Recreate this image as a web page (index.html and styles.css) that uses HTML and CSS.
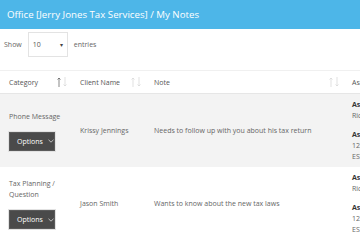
FILE: index.html
```html
<!DOCTYPE html>
<html lang="en">
<head>
  <meta charset="UTF-8" />
  <title>My Notes</title>
  <link rel="stylesheet" href="styles.css">
</head>
<body>

  <div class="title-bar">
    <h2>Office [Jerry Jones Tax Services] / My Notes</h2>
  </div>

  <!-- page length -->
  <div class="length-bar">
    <span>Show</span>
    <span class="select">10 <span class="caret">&#9662;</span></span>
    <span>entries</span>
  </div>

  <!-- notes table -->
  <table class="notes">
    <thead>
      <tr>
        <th class="col-cat"><div class="th-inner">Category <span class="sort active"><svg width="10" height="10" viewBox="0 0 10 10"><path class="up" d="M2 10V1M0.5 2.5L2 1 3.5 2.5"/><path class="down" d="M8 0v9M6.5 7.5L8 9 9.5 7.5"/></svg></span></div></th>
        <th class="col-client"><div class="th-inner">Client Name <span class="sort"><svg width="10" height="10" viewBox="0 0 10 10"><path class="up" d="M2 10V1M0.5 2.5L2 1 3.5 2.5"/><path class="down" d="M8 0v9M6.5 7.5L8 9 9.5 7.5"/></svg></span></div></th>
        <th class="col-note"><div class="th-inner">Note <span class="sort"><svg width="10" height="10" viewBox="0 0 10 10"><path class="up" d="M2 10V1M0.5 2.5L2 1 3.5 2.5"/><path class="down" d="M8 0v9M6.5 7.5L8 9 9.5 7.5"/></svg></span></div></th>
        <th class="col-assign"><div class="th-inner">Assigned</div></th>
      </tr>
    </thead>
    <tbody>
      <tr class="odd">
        <td>
          <div>Phone Message</div>
          <button class="options">Options <svg class="chev" width="6" height="4" viewBox="0 0 6 4"><path d="M0.5 0.8L3 3.2 5.5 0.8"/></svg></button>
        </td>
        <td>Krissy Jennings</td>
        <td>Needs to follow up with you about his tax return</td>
        <td class="assign">
          <strong>Assigned To:</strong><br>Rick Jones
          <div class="gap"></div>
          <strong>Assigned By:</strong><br>12/04/2017<br>ESTIMATED
        </td>
      </tr>
      <tr>
        <td>
          <div>Tax Planning / Question</div>
          <button class="options">Options <svg class="chev" width="6" height="4" viewBox="0 0 6 4"><path d="M0.5 0.8L3 3.2 5.5 0.8"/></svg></button>
        </td>
        <td>Jason Smith</td>
        <td>Wants to know about the new tax laws</td>
        <td class="assign">
          <strong>Assigned To:</strong><br>Rick Jones
          <div class="gap"></div>
          <strong>Assigned By:</strong><br>12/06/2017<br>ESTIMATED
        </td>
      </tr>
    </tbody>
  </table>

</body>
</html>
```

FILE: styles.css
```css
body {
  margin: 0;
  font-family: "Open Sans", sans-serif;
  font-size: 7px;
  color: #666;
  overflow: hidden;
  width: 360px;
}

.title-bar {
  background: #4db6e8;
  height: 29px;
  display: flex;
  align-items: center;
  padding-left: 7px;
}

.title-bar h2 {
  margin: 0;
  font-size: 9.7px;
  font-weight: normal;
  color: #fff;
}

.length-bar {
  display: flex;
  align-items: center;
  gap: 6px;
  padding: 3px 4px 0;
  height: 25px;
  margin-bottom: 13px;
}

.select {
  display: flex;
  justify-content: space-between;
  align-items: center;
  box-sizing: border-box;
  width: 40px;
  height: 25px;
  border: 1px solid #e3e3e3;
  padding: 0 4px;
  color: #555;
}

.caret {
  font-size: 6px;
  color: #444;
}

.notes {
  border-collapse: collapse;
  table-layout: fixed;
  width: 420px;
}

.col-cat { width: 72px; }
.col-client { width: 74px; }
.col-note { width: 198px; }
.col-assign { width: 76px; }

th {
  font-weight: normal;
  text-align: left;
  color: #555;
  height: 23px;
  padding: 0 5px 0 9px;
  border-top: 1px solid #f0f0f0;
  border-bottom: 1px solid #e6e6e6;
  box-sizing: border-box;
}

.col-client, .col-note, .col-assign {
  padding-left: 8px;
}

.th-inner {
  display: flex;
  justify-content: space-between;
  align-items: center;
  white-space: nowrap;
}

.sort svg {
  display: block;
  fill: none;
  stroke-width: 0.7;
}

.sort path {
  stroke: #d4d4d4;
}

.sort.active .up {
  stroke: #555;
}

td {
  padding: 5px 8px;
  vertical-align: middle;
  line-height: 11px;
}

td:first-child {
  padding-left: 9px;
  padding-right: 4px;
}

tr.odd td {
  background: #f3f3f3;
}

.options {
  margin-top: 10px;
  display: flex;
  align-items: center;
  gap: 5px;
  height: 19px;
  width: 46px;
  padding: 0 0 0 7px;
  background: #4a4a4a;
  color: #fff;
  border: 1px solid #5a5a5a;
  box-shadow: 0 0 0 1px #e2e2e2;
  font-family: "Open Sans", sans-serif;
  font-size: 7px;
}

.chev {
  fill: none;
  stroke: #ddd;
  stroke-width: 0.8;
}

.assign {
  white-space: nowrap;
}

.assign strong {
  color: #333;
}

.gap {
  height: 8px;
}
```
